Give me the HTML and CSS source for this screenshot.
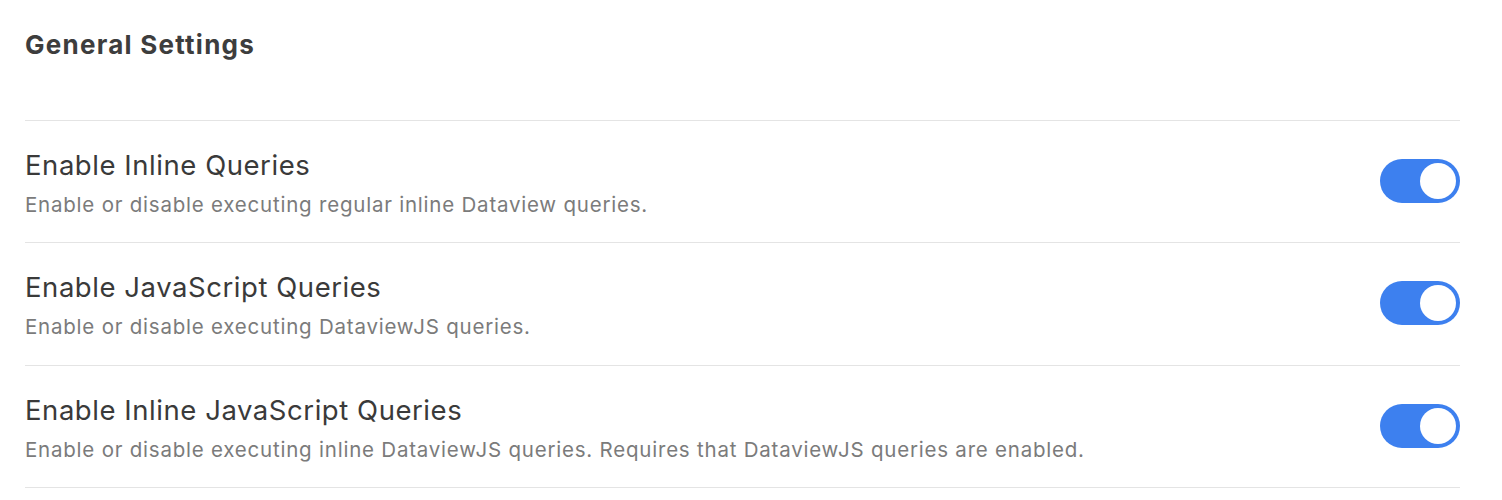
FILE: index.html
```html
<!DOCTYPE html>
<html>
<head>
<meta charset="utf-8">
<link rel="stylesheet" href="styles.css">
</head>
<body>
<div class="settings">
  <h2 class="heading">General Settings</h2>
  <div class="item">
    <div class="info">
      <div class="name">Enable Inline Queries</div>
      <div class="desc">Enable or disable executing regular inline Dataview queries.</div>
    </div>
    <div class="toggle on"><div class="knob"></div></div>
  </div>
  <div class="item mid">
    <div class="info">
      <div class="name">Enable JavaScript Queries</div>
      <div class="desc">Enable or disable executing DataviewJS queries.</div>
    </div>
    <div class="toggle on"><div class="knob"></div></div>
  </div>
  <div class="item last">
    <div class="info">
      <div class="name">Enable Inline JavaScript Queries</div>
      <div class="desc">Enable or disable executing inline DataviewJS queries. Requires that DataviewJS queries are enabled.</div>
    </div>
    <div class="toggle on"><div class="knob"></div></div>
  </div>
</div>
</body>
</html>
```
FILE: styles.css
```css
html, body {
  margin: 0;
  padding: 0;
  background: #ffffff;
}
body {
  font-family: Inter, "Liberation Sans", sans-serif;
  color: #3a3a3a;
}
.settings {
  padding: 0 42px 0 25px;
}
.heading {
  margin: 0;
  padding-top: 28px;
  height: 120px;
  box-sizing: border-box;
  font-size: 26px;
  line-height: 34px;
  font-weight: 700;
  color: #3d3d3d;
  letter-spacing: 1.25px;
}
.item {
  display: flex;
  align-items: flex-start;
  justify-content: space-between;
  border-top: 1px solid #e4e4e4;
  height: 122px;
  box-sizing: border-box;
  padding-top: 28px;
}
.item.mid {
  height: 123px;
}
.item.last {
  height: 123px;
  border-bottom: 1px solid #e4e4e4;
}
.info {
  display: flex;
  flex-direction: column;
}
.name {
  font-size: 27.5px;
  line-height: 32px;
  letter-spacing: 0.55px;
  color: #3a3a3a;
}
.desc {
  margin-top: 11px;
  font-size: 20.5px;
  line-height: 26px;
  letter-spacing: 0.78px;
  color: #7b7b7b;
}
.toggle {
  margin-top: 10px;
  width: 80px;
  height: 44px;
  border-radius: 22px;
  background: #3d80ef;
  display: flex;
  align-items: center;
  justify-content: flex-end;
  padding: 0 4px;
  box-sizing: border-box;
}
.knob {
  width: 36px;
  height: 36px;
  border-radius: 50%;
  background: #ffffff;
}
```
